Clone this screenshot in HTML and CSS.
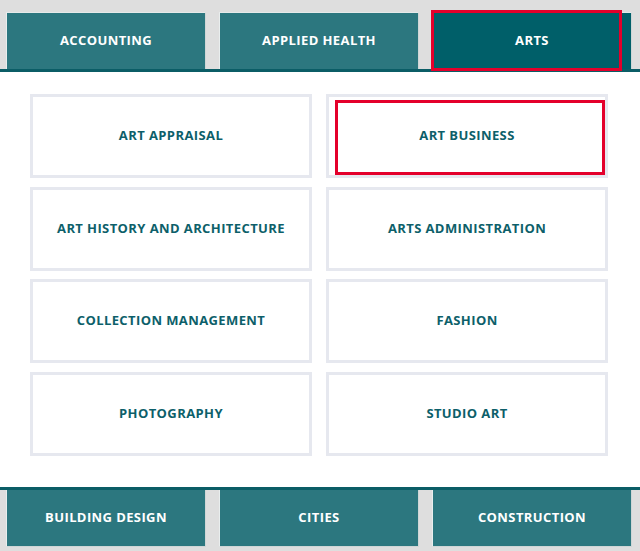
FILE: index.html
```html
<!DOCTYPE html>
<html>
<head>
<meta charset="utf-8">
<link rel="stylesheet" href="styles.css">
</head>
<body>
<nav class="tabs tabs-top">
  <a class="tab">ACCOUNTING</a>
  <a class="tab">APPLIED HEALTH</a>
  <a class="tab tab-active">ARTS<span class="focus-ring tab-ring"></span></a>
</nav>
<main class="panel">
  <div class="grid">
    <a class="card">ART APPRAISAL</a>
    <a class="card">ART BUSINESS<span class="focus-ring card-ring"></span></a>
    <a class="card">ART HISTORY AND ARCHITECTURE</a>
    <a class="card">ARTS ADMINISTRATION</a>
    <a class="card">COLLECTION MANAGEMENT</a>
    <a class="card">FASHION</a>
    <a class="card">PHOTOGRAPHY</a>
    <a class="card">STUDIO ART</a>
  </div>
</main>
<nav class="tabs tabs-bottom">
  <a class="tab">BUILDING DESIGN</a>
  <a class="tab">CITIES</a>
  <a class="tab">CONSTRUCTION</a>
</nav>
</body>
</html>
```
FILE: styles.css
```css
html, body {
  margin: 0;
  padding: 0;
}
body {
  background: #dedede;
  font-family: "Open Sans", "Liberation Sans", sans-serif;
  font-weight: 700;
  font-size: 13px;
  width: 640px;
  height: 551px;
  overflow: hidden;
}
.tabs {
  display: flex;
  gap: 13px;
  padding: 0 8px 0 6px;
}
.tabs-top {
  padding-top: 12px;
  border-bottom: 3px solid #0b5d66;
}
.tabs-bottom {
  border-top: 3px solid #0b5d66;
  padding-bottom: 5px;
}
.tab {
  position: relative;
  flex: 1;
  height: 57px;
  box-sizing: border-box;
  background: #2c777f;
  color: #ffffff;
  display: flex;
  align-items: center;
  justify-content: center;
  border-left: 1px solid #e9eeee;
  border-right: 1px solid #cfd6d6;
  border-top: 1px solid #e6eaea;
  letter-spacing: 0.4px;
  padding-bottom: 2px;
}
.tabs-bottom .tab {
  border-top: none;
  border-bottom: 1px solid #cfd6d6;
}
.tab-active {
  background: #005f69;
}
.focus-ring {
  position: absolute;
  box-sizing: border-box;
  border: 3px solid #e4002b;
  pointer-events: none;
}
.tab-ring {
  left: -2px;
  top: -3px;
  width: 191px;
  height: 61px;
}
.panel {
  background: #ffffff;
  padding: 22px 32px 31px 30px;
}
.grid {
  display: grid;
  grid-template-columns: 1fr 1fr;
  column-gap: 14px;
  row-gap: 8.5px;
}
.card {
  position: relative;
  height: 84px;
  box-sizing: border-box;
  border: 3px solid #e6e8ef;
  color: #0d5f6a;
  display: flex;
  align-items: center;
  justify-content: center;
  letter-spacing: 0.4px;
  padding-bottom: 2px;
}
.card-ring {
  left: 6px;
  top: 3px;
  right: 0;
  bottom: 0;
}
```
